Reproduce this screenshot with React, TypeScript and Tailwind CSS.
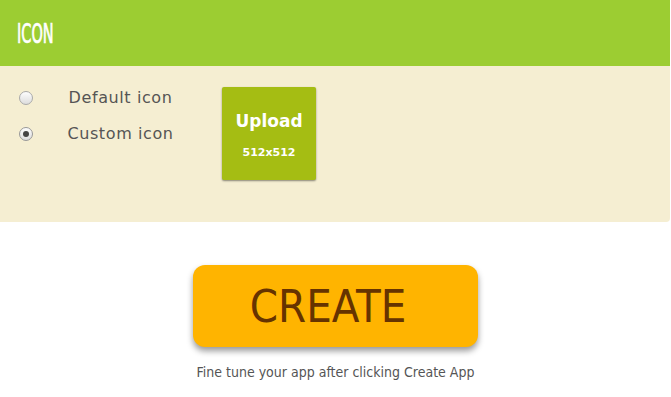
export default function App() {
  const condensed = { fontFamily: '"DejaVu Sans Condensed", "Liberation Sans Narrow", sans-serif' }
  return (
    <div className="w-[671px] h-[397px] bg-white overflow-hidden">
      <div className="w-[670px] rounded-br-[4px] overflow-hidden">
        <div className="h-[66px] bg-[#9ccd32] flex items-center px-[17px]">
          <span className="inline-block text-white text-[26px] origin-left scale-x-[0.62] mt-[2px] [-webkit-text-stroke:0.7px_white]" style={condensed}>ICON</span>
        </div>
        <div className="h-[156px] bg-[#f5eed2] flex pt-[21px] pl-[19px]">
          <div className="flex flex-col gap-[14px]" style={{ fontFamily: 'Verdana, "DejaVu Sans", sans-serif' }}>
            <label className="flex items-center h-[22px]">
              <span className="w-[14px] h-[14px] rounded-full border border-[#aaa] bg-gradient-to-b from-[#fdfdfd] to-[#ddd]" />
              <span className="w-[175px] text-center text-[16px] tracking-[0.6px] text-[#555]">Default icon</span>
            </label>
            <label className="flex items-center h-[22px]">
              <span className="w-[14px] h-[14px] rounded-full border border-[#999] bg-gradient-to-b from-[#fdfdfd] to-[#ddd] flex items-center justify-center">
                <span className="w-[6px] h-[6px] rounded-full bg-[#444]" />
              </span>
              <span className="w-[175px] text-center text-[16px] tracking-[0.6px] text-[#555]">Custom icon</span>
            </label>
          </div>
          <div className="ml-[14px] w-[94px] h-[93px] bg-[#a5bd13] rounded-[2px] shadow-[0_1px_2px_rgba(0,0,0,0.45)] flex flex-col items-center justify-center text-white font-bold" style={{ fontFamily: 'Verdana, "DejaVu Sans", sans-serif' }}>
            <span className="text-[17px] leading-none mt-[4px]">Upload</span>
            <span className="text-[11px] leading-none mt-[17px]">512x512</span>
          </div>
        </div>
      </div>
      <div className="flex flex-col items-center pt-[43px]">
        <button className="w-[285px] h-[82px] bg-[#ffb400] rounded-[12px] shadow-[0_4px_6px_rgba(0,0,0,0.4)] flex items-center justify-center">
          <span className="text-[#663300] text-[45px] leading-none ml-[-15px]" style={condensed}>CREATE</span>
        </button>
        <p className="mt-[15px] text-[14px] text-[#555]" style={condensed}>Fine tune your app after clicking Create App</p>
      </div>
    </div>
  )
}
